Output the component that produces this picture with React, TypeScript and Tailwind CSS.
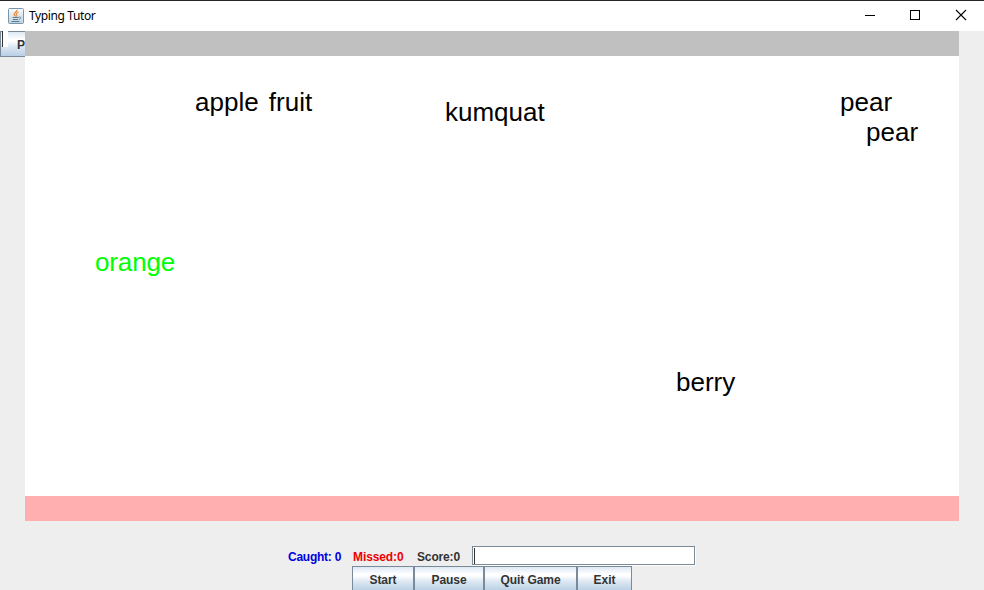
type Word = { text: string; place: string };

const words: Word[] = [
  { text: "apple fruit", place: "left-[170px] top-[31px] [word-spacing:3px]" },
  { text: "kumquat", place: "left-[420px] top-[41px]" },
  { text: "pear", place: "left-[815px] top-[31px]" },
  { text: "pear", place: "left-[841px] top-[61px]" },
  { text: "orange", place: "left-[70px] top-[191px] tracking-[-0.15px] text-[#00ff00]" },
  { text: "berry", place: "left-[651px] top-[311px]" },
];

const buttons = [
  { label: "Start", width: "w-[62px]" },
  { label: "Pause", width: "w-[70px]" },
  { label: "Quit Game", width: "w-[93px]" },
  { label: "Exit", width: "w-[55px]" },
];

const metal =
  "border border-[#7a8a99] bg-[linear-gradient(to_bottom,#dde8f3_0%,#ffffff_30%,#ffffff_36%,#dde8f3_60%,#b8cfe5_100%)]";

function JavaIcon() {
  return (
    <svg width="16" height="16" viewBox="0 0 16 16" fill="none">
      <defs>
        <linearGradient id="tile" x1="0" y1="0" x2="0" y2="1">
          <stop offset="0" stopColor="#fafcfd" />
          <stop offset="1" stopColor="#c3d2dd" />
        </linearGradient>
      </defs>
      <rect x="0.5" y="0.5" width="15" height="15" rx="1" fill="url(#tile)" stroke="#7895ac" />
      <path d="M9 1.8C9.4 4 5.6 4.8 6.2 6.4C6.5 7.2 7.4 7.7 7.4 8.6" stroke="#e98b3c" strokeWidth="1.4" />
      <path d="M10.6 4.2C8.2 5.2 8.1 6 8.8 7C9.1 7.5 8.9 8.2 8.4 8.6" stroke="#e98b3c" strokeWidth="1.1" />
      <path d="M4.5 9.5H10.5M5 11.5H10M3.5 13.5H11.5" stroke="#557c9b" strokeWidth="1" />
      <path d="M10.7 9C13.8 8.6 12.9 10.9 10.8 11.4" stroke="#557c9b" strokeWidth="0.9" />
    </svg>
  );
}

function TitleBar() {
  return (
    <header className="flex h-[31px] shrink-0 items-center border-t border-[#292429] bg-white pl-2">
      <JavaIcon />
      <span className="ml-[5px] font-['Noto_Sans',sans-serif] text-[12px] leading-4 tracking-[-0.38px] text-black">
        Typing Tutor
      </span>
      <svg className="ml-auto" width="138" height="30" fill="none" stroke="#000">
        <path d="M19 14.5H29" shapeRendering="crispEdges" />
        <rect x="64.5" y="9.5" width="9" height="9" shapeRendering="crispEdges" />
        <path d="M110 9L120 19M120 9L110 19" strokeWidth="1.1" />
      </svg>
    </header>
  );
}

export default function App() {
  return (
    <div className="flex h-[590px] w-[984px] flex-col overflow-hidden bg-[#eeeeee] font-['Liberation_Sans',Arial,sans-serif]">
      <TitleBar />
      <div className="flex h-[490px] shrink-0">
        <aside className="w-[25px]">
          <div className={"relative h-[26px] w-[25px] border-r-0 pl-[16px] pt-[5px] text-[12px] font-bold leading-4 text-[#333333] " + metal}>
            P
            <span className="absolute left-px top-[-1px] h-4 w-[6px] border-l border-[#333333] bg-white" />
          </div>
        </aside>
        <main className="relative flex w-[934px] flex-col bg-white">
          <div className="h-[25px] bg-[#c0c0c0]" />
          <div className="flex-1" />
          <div className="h-[25px] bg-[#ffafaf]" />
          {words.map((word, index) => (
            <span key={index} className={"absolute mt-[25px] whitespace-nowrap text-[26px] leading-[30px] " + word.place}>
              {word.text}
            </span>
          ))}
        </main>
      </div>
      <footer className="pt-[25px] text-[12px] font-bold leading-[14px] text-[#333333]">
        <div className="flex h-5 items-start pl-[288px]">
          <span className="w-[65px] whitespace-nowrap pt-1 tracking-[-0.25px] text-[#0000e0]">Caught: 0</span>
          <span className="w-[64px] whitespace-nowrap pt-1 tracking-[-0.1px] text-[#f00000]">Missed:0</span>
          <span className="w-[55px] whitespace-nowrap pt-1 tracking-[-0.15px]">Score:0</span>
          <div className="h-[19px] w-[223px] border border-[#7a8a99] bg-white pl-px pt-px shadow-[1px_1px_0_#ffffff]">
            <div className="h-4 w-px bg-[#333333]" />
          </div>
        </div>
        <div className="flex pl-[352px]">
          {buttons.map((button) => (
            <button key={button.label} className={"h-[26px] shrink-0 whitespace-nowrap pt-px tracking-[-0.05px] " + button.width + " " + metal}>
              {button.label}
            </button>
          ))}
        </div>
      </footer>
    </div>
  );
}
